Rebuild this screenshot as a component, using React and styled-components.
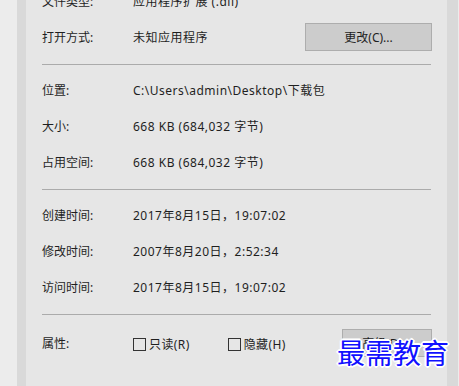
import styled, { createGlobalStyle } from 'styled-components';

const GlobalStyle = createGlobalStyle`
    html, body {
        margin: 0;
        padding: 0;
        background: #ebebeb;
    }
    body {
        font-family: "Noto Sans", "Noto Sans CJK SC", sans-serif;
    }
`;

const generalRows = [
    { label: '文件类型:', value: '应用程序扩展 (.dll)' },
];

const locationRows = [
    { label: '位置:', value: 'C:\\Users\\admin\\Desktop\\下载包' },
    { label: '大小:', value: '668 KB (684,032 字节)' },
    { label: '占用空间:', value: '668 KB (684,032 字节)' },
];

const timeRows = [
    { label: '创建时间:', value: '2017年8月15日，19:07:02' },
    { label: '修改时间:', value: '2007年8月20日，2:52:34' },
    { label: '访问时间:', value: '2017年8月15日，19:07:02' },
];

export default function App() {
    return (
        <>
            <GlobalStyle />
            <Window>
                <EdgeStrip />
                <Band width={9} />
                <Panel>
                    <Section first>
                        {generalRows.map((row) => (
                            <Row key={row.label}>
                                <Label>{row.label}</Label>
                                <Value>{row.value}</Value>
                            </Row>
                        ))}
                        <Row>
                            <Label>打开方式:</Label>
                            <Value>未知应用程序</Value>
                            <Button width={127}>更改(C)...</Button>
                        </Row>
                    </Section>
                    <Divider />
                    <Section>
                        {locationRows.map((row) => (
                            <Row key={row.label}>
                                <Label>{row.label}</Label>
                                <Value>{row.value}</Value>
                            </Row>
                        ))}
                    </Section>
                    <Divider />
                    <Section>
                        {timeRows.map((row) => (
                            <Row key={row.label}>
                                <Label>{row.label}</Label>
                                <Value>{row.value}</Value>
                            </Row>
                        ))}
                    </Section>
                    <Divider />
                    <AttrRow>
                        <Label>属性:</Label>
                        <Checks>
                            <CheckItem>
                                <Box />
                                只读(R)
                            </CheckItem>
                            <CheckItem>
                                <Box />
                                隐藏(H)
                            </CheckItem>
                        </Checks>
                        <Button width={90}>高级(D)...</Button>
                    </AttrRow>
                    <Watermark>最需教育</Watermark>
                </Panel>
                <Band width={11} />
                <Band width={1} light />
            </Window>
        </>
    );
}

const Window = styled.div`
    width: 459px;
    height: 386px;
    display: flex;
    overflow: hidden;
    background: #ebebeb;
`;

const EdgeStrip = styled.div`
    width: 17px;
    flex-shrink: 0;
    background: #ececec;
`;

const Band = styled.div`
    width: ${props => props.width}px;
    flex-shrink: 0;
    background: ${props => props.light ? "#ececec" : "#d9d9d9"};
`;

const Panel = styled.div`
    position: relative;
    flex: 1;
    background: #e6e6e6;
    padding: 0 16px;
    color: #1f1f1f;
    font-size: 12px;
`;

const Section = styled.div`
    display: flex;
    flex-direction: column;
    margin: ${props => props.first ? "-16px 0 8px 0" : "8px 0"};
`;

const Row = styled.div`
    height: 36px;
    display: flex;
    align-items: center;
    padding-bottom: 2px;
    box-sizing: border-box;
`;

const Label = styled.div`
    width: 91px;
    flex-shrink: 0;
    white-space: nowrap;
`;

const Value = styled.div`
    flex: 1;
    white-space: nowrap;
    letter-spacing: 0.5px;
`;

const Divider = styled.div`
    height: 1px;
    background: #ababab;
`;

const Button = styled.div`
    width: ${props => props.width}px;
    height: 28px;
    box-sizing: border-box;
    margin-right: -1px;
    flex-shrink: 0;
    display: flex;
    align-items: center;
    justify-content: center;
    background: #cccccc;
    border: 1px solid #adadad;
    white-space: nowrap;
`;

const AttrRow = styled.div`
    display: flex;
    align-items: center;
    margin-top: 14px;
`;

const Checks = styled.div`
    flex: 1;
    display: flex;
    gap: 38px;
    padding-top: 2px;
`;

const CheckItem = styled.div`
    display: flex;
    align-items: center;
    gap: 3px;
    white-space: nowrap;
    letter-spacing: 0.4px;
`;

const Box = styled.span`
    width: 13px;
    height: 13px;
    box-sizing: border-box;
    border: 1px solid #333333;
    background: #e6e6e6;
`;

const Watermark = styled.div`
    position: absolute;
    left: 311px;
    top: 332px;
    font-size: 28px;
    line-height: 40px;
    color: #1010ff;
    font-family: "Noto Sans CJK SC", sans-serif;
    text-shadow: 1px 1px 0 #fff, -1px -1px 0 #fff, 1px -1px 0 #fff, -1px 1px 0 #fff, 2px 0 0 #fff, -2px 0 0 #fff, 0 2px 0 #fff, 0 -2px 0 #fff;
    white-space: nowrap;
`;
